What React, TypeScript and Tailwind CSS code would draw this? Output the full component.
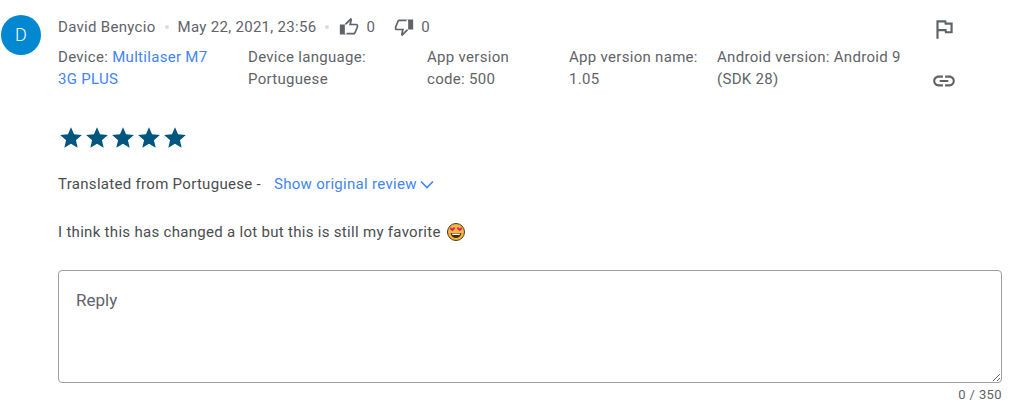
import { Fragment } from 'react';

const meta = [
  { width: 'w-[190px] pr-[20px]', label: 'Device: ', link: 'Multilaser M7 3G PLUS' },
  { width: 'w-[179px] pr-[20px]', label: 'Device language: Portuguese' },
  { width: 'w-[142px] pr-[30px]', label: 'App version code: 500' },
  { width: 'w-[148px] pr-[10px]', label: 'App version name: 1.05' },
  { width: 'w-[190px] pr-[2px]', label: 'Android version: Android 9 (SDK 28)' },
];

function MaterialIcon({ d, className }: { d: string; className: string }) {
  return (
    <svg viewBox="0 0 24 24" className={className} fill="currentColor">
      <path d={d} />
    </svg>
  );
}

function Dot() {
  return <span className="mx-[9px] h-[4px] w-[4px] rounded-full bg-[#dadce0]" />;
}

function Star() {
  return (
    <MaterialIcon
      className="h-[26px] w-[26px] text-[#01567f]"
      d="M12 17.27L18.18 21l-1.64-7.03L22 9.24l-7.19-.61L12 2 9.19 8.63 2 9.24l5.46 4.73L5.82 21z"
    />
  );
}

export default function App() {
  return (
    <div className="h-[402px] w-[1024px] overflow-hidden bg-white pl-[1px] pt-[16px] font-['Roboto',sans-serif] text-[15px] leading-[22px] tracking-[0.3px] text-[#5f6368]">
      <div className="flex">
        {/* Avatar */}
        <div className="-mt-[1px] flex h-[40px] w-[40px] shrink-0 items-center justify-center rounded-full bg-[#0288d1] text-[18px] font-light text-white">
          D
        </div>

        <div className="ml-[17px] w-[944px]">
          <div className="flex">
            <div className="flex-1">
              {/* Author row */}
              <div className="flex h-[22px] items-center">
                <span>David Benycio</span>
                <Dot />
                <span>May 22, 2021, 23:56</span>
                <Dot />
                <MaterialIcon
                  className="ml-[1px] h-[20px] w-[20px]"
                  d="M9 21h9c.83 0 1.54-.5 1.84-1.22l3.02-7.05c.09-.23.14-.47.14-.73v-2c0-1.1-.9-2-2-2h-6.31l.95-4.57.03-.32c0-.41-.17-.79-.44-1.06L14.17 1 7.58 7.59C7.22 7.95 7 8.45 7 9v10c0 1.1.9 2 2 2zM9 9l4.34-4.34L12 10h9v2l-3 7H9V9zM1 9h8v12H1z"
                />
                <span className="ml-[7px]">0</span>
                <MaterialIcon
                  className="ml-[19px] h-[20px] w-[20px]"
                  d="M15 3H6c-.83 0-1.54.5-1.84 1.22l-3.02 7.05c-.09.23-.14.47-.14.73v2c0 1.1.9 2 2 2h6.31l-.95 4.57-.03.32c0 .41.17.79.44 1.06L9.83 23l6.59-6.59c.36-.36.58-.86.58-1.41V5c0-1.1-.9-2-2-2zm0 12l-4.34 4.34L12 14H3v-2l3-7h9v10zm0-12h8v12h-8z"
                />
                <span className="ml-[7px]">0</span>
              </div>

              {/* Device details */}
              <div className="mt-[8px] flex">
                {meta.map((item) => (
                  <div key={item.label} className={item.width}>
                    <Fragment>{item.label}</Fragment>
                    {item.link && <span className="text-[#4285f4]">{item.link}</span>}
                  </div>
                ))}
              </div>
            </div>

            {/* Actions */}
            <div className="mr-[46px] flex w-[24px] flex-col items-center text-[#5f6368]">
              <MaterialIcon
                className="h-[26px] w-[26px] shrink-0"
                d="M12.36 6l.4 2H18v6h-3.36l-.4-2H7V6h5.36M14 4H5v17h2v-7h5.6l.4 2h7V6h-5.6L14 4z"
              />
              <MaterialIcon
                className="mt-[26px] h-[26px] w-[26px] shrink-0"
                d="M3.9 12c0-1.71 1.39-3.1 3.1-3.1h4V7H7c-2.76 0-5 2.24-5 5s2.24 5 5 5h4v-1.9H7c-1.71 0-3.1-1.39-3.1-3.1zM8 13h8v-2H8v2zm9-6h-4v1.9h4c1.71 0 3.1 1.39 3.1 3.1s-1.39 3.1-3.1 3.1h-4V17h4c2.76 0 5-2.24 5-5s-2.24-5-5-5z"
              />
            </div>
          </div>

          {/* Rating */}
          <div className="mt-[31px] flex">
            <Star />
            <Star />
            <Star />
            <Star />
            <Star />
          </div>

          <div className="mt-[22px] flex h-[22px] items-center text-[#4a4d50]">
            <span>Translated from Portuguese -</span>
            <span className="ml-[13px] text-[#4285f4]">Show original review</span>
            <svg viewBox="0 0 14 14" className="ml-[3px] h-[14px] w-[14px] text-[#4285f4]" fill="none" stroke="currentColor" strokeWidth="1.6">
              <path d="M1 4.500L7 10.500l6-6" />
            </svg>
          </div>

          <div className="mt-[26px] flex h-[22px] items-center text-[#4a4d50]">
            <span>I think this has changed a lot but this is still my favorite</span>
            <svg viewBox="0 0 18 18" className="ml-[6px] h-[18px] w-[18px]">
              <circle cx="9" cy="9" r="8.5" fill="#f4b93e" stroke="#4a3a1a" strokeWidth="1" />
              <path d="M3.500 10c3.500 1 7.500 1 11 0-.5 3.300-2.800 5-5.500 5s-5-1.700-5.500-5z" fill="#4a2c12" />
              <path d="M5 10.700c2.600.5 5.400.5 8 0l-.4 1.300H5.400z" fill="#fff" />
              <path d="M5.500 8.300L3 6.200c-.9-1 .5-2.200 1.500-1.300l1 .7.700-1c1-1 2.400.2 1.600 1.300z" fill="#e5197e" />
              <path d="M12.500 8.300L15 6.200c.9-1-.5-2.200-1.500-1.300l-1 .7-.7-1c-1-1-2.400.2-1.600 1.300z" fill="#e5197e" />
            </svg>
          </div>

          {/* Reply box */}
          <textarea
            placeholder="Reply"
            className="mt-[27px] block h-[113px] w-full rounded-[4px] border border-[#9aa0a6] px-[17px] py-[18px] text-[17px] leading-[22px] tracking-normal outline-none placeholder:text-[#5f6368]"
          />
          <div className="mt-[2px] text-right text-[13px] leading-[20px] tracking-[0.4px] text-[#5f6368]">0 / 350</div>
        </div>
      </div>
    </div>
  );
}
